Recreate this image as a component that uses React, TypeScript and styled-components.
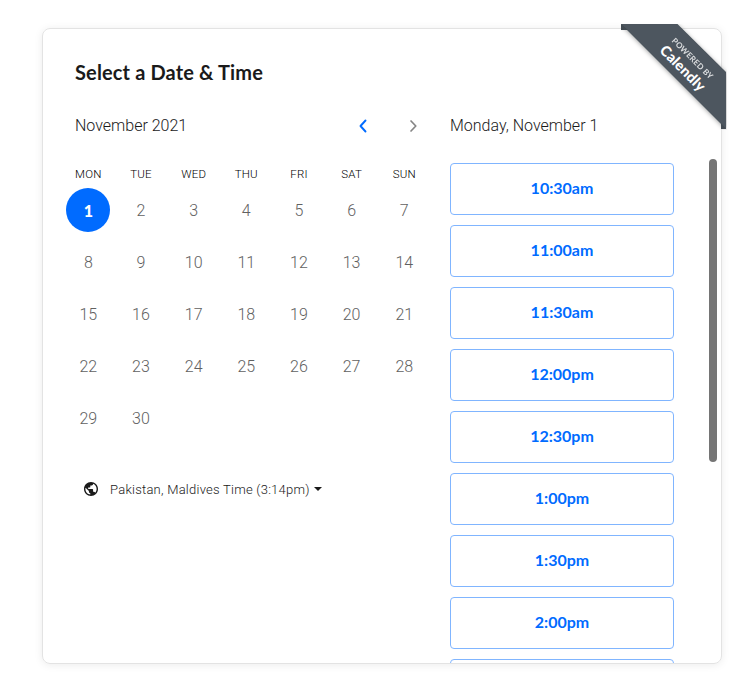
import React from "react";
import styled, { createGlobalStyle, css } from "styled-components";

const blue = "#006bff";
const ink = "#1a1a1a";

const GlobalStyle = createGlobalStyle`
  * { box-sizing: border-box; }
  body { margin: 0; background: #fff; color: ${ink}; font-family: Roboto, Lato, sans-serif; font-weight: 300; overflow: hidden; }
  button { font: inherit; color: inherit; background: none; border: 0; padding: 0; cursor: pointer; }
`;

const Page = styled.main`
  height: 684px;
  padding: 28px 26px 20px 42px;
`;

const Card = styled.section`
  position: relative;
  width: 680px;
  height: 636px;
  border: 1px solid #e3e3e3;
  border-radius: 8px;
  box-shadow: 0 1px 8px rgba(0, 0, 0, 0.08);
  display: flex;
`;

const CalendarPane = styled.div`
  width: 375px;
  padding: 31px 0 0 32px;
`;

const Title = styled.h1`
  margin: 0;
  font: 700 20px/24px Lato, sans-serif;
  letter-spacing: 0.14px;
`;

const MonthBar = styled.div`
  display: flex;
  align-items: center;
  height: 24px;
  margin-top: 30px;
`;

const Month = styled.div`
  flex: 1;
  font-size: 16px;
  line-height: 24px;
`;

const Arrow = styled.button<{ $active?: boolean }>`
  display: flex;
  justify-content: center;
  align-items: center;
  width: 24px;
  height: 24px;
  margin-left: 26px;
  margin-right: -7px;
  color: ${(p) => (p.$active ? blue : "#858585")};
  &:first-of-type { margin-right: 0; }
`;

const WeekRow = styled.div`
  display: grid;
  grid-template-columns: repeat(7, 52.67px);
  margin: 28px 0 0 -13px;
  text-align: center;
  line-height: 16px;
`;

const Weekday = styled.div`
  font-size: 11.5px;
  letter-spacing: 0.2px;
  color: #000;
`;

const Days = styled.div`
  display: grid;
  grid-template-columns: repeat(7, 52.67px);
  grid-auto-rows: 52px;
  margin: 2px 0 0 -13px;
  justify-items: center;
  align-items: center;
`;

const Day = styled.div<{ $selected?: boolean }>`
  display: flex;
  align-items: center;
  justify-content: center;
  width: 44px;
  height: 44px;
  border-radius: 50%;
  padding-top: 1px;
  font-size: 16px;
  color: #616161;
  ${(p) => p.$selected && css`
    background: ${blue};
    color: #fff;
    font-family: Lato, sans-serif;
    font-weight: 900;
  `}
`;

const Timezone = styled.div`
  display: flex;
  align-items: center;
  height: 20px;
  margin: 35px 0 0 9px;
  font-size: 13px;
  letter-spacing: 0.24px;
`;

const ZoneName = styled.span`
  margin: 0 4px 0 12px;
  white-space: nowrap;
`;

const TimesPane = styled.div`
  display: flex;
  flex-direction: column;
  flex: 1;
  padding: 85px 4px 0 32px;
  overflow: hidden;
`;

const SelectedDate = styled.div`
  font-size: 16px;
  line-height: 24px;
`;

const TimesArea = styled.div`
  display: flex;
  justify-content: space-between;
  flex: 1;
  min-height: 0;
  overflow: hidden;
  margin-top: 21px;
`;

const TimeList = styled.div`
  display: flex;
  flex-direction: column;
  gap: 10px;
  padding-top: 4px;
`;

const TimeSlot = styled.button`
  flex: none;
  width: 224px;
  height: 52px;
  padding-bottom: 2px;
  border: 1px solid #80b5ff;
  border-radius: 4px;
  color: ${blue};
  font: 700 16px/20px Lato, sans-serif;
`;

const ScrollThumb = styled.div`
  width: 8px;
  height: 303px;
  border-radius: 4px;
  background: #757575;
`;

/* Corner banner laid over the card's top right edge. */
const Ribbon = styled.a`
  position: absolute;
  top: -5px;
  right: -6px;
  width: 106px;
  height: 106px;
  overflow: hidden;
`;

const RibbonShape = styled.svg`
  display: block;
`;

const RibbonText = styled.span`
  position: absolute;
  left: 15.5px;
  top: 26px;
  width: 100px;
  display: flex;
  flex-direction: column;
  align-items: center;
  transform: rotate(45deg);
  font-family: Lato, sans-serif;
  font-weight: 700;
  color: #fff;
`;

const PoweredBy = styled.span`
  font-size: 8px;
  line-height: 12px;
  opacity: 0.8;
  letter-spacing: 0.2px;
`;

const Brand = styled.span`
  font-size: 14.5px;
  line-height: 16px;
  font-weight: 900;
  letter-spacing: 0.2px;
`;

const weekdays = ["MON", "TUE", "WED", "THU", "FRI", "SAT", "SUN"];
const days = Array.from({ length: 30 }, (_, i) => i + 1);
const times = ["10:30am", "11:00am", "11:30am", "12:00pm", "12:30pm", "1:00pm", "1:30pm", "2:00pm"];

const Chevron = ({ d, width }: { d: string; width: number }) => (
  <svg width="10" height="14" viewBox="0 0 10 14" fill="none" stroke="currentColor" strokeWidth={width} strokeLinecap="round" strokeLinejoin="round">
    <path d={d} />
  </svg>
);

export default function App() {
  return (
    <Page>
      <GlobalStyle />
      <Card>
        <CalendarPane>
          <Title>Select a Date &amp; Time</Title>
          <MonthBar>
            <Month>November 2021</Month>
            <Arrow $active aria-label="Previous month"><Chevron d="M7.5 1.5 2.5 7l5 5.5" width={1.9} /></Arrow>
            <Arrow aria-label="Next month"><Chevron d="m3 2 4.8 5L3 12" width={1.7} /></Arrow>
          </MonthBar>
          <WeekRow>{weekdays.map((d) => <Weekday key={d}>{d}</Weekday>)}</WeekRow>
          <Days>{days.map((d) => <Day key={d} $selected={d === 1}>{d}</Day>)}</Days>
          <Timezone>
            <svg width="14" height="14" viewBox="2 2 20 20" fill={ink}>
              <path d="M12 2C6.48 2 2 6.48 2 12s4.48 10 10 10 10-4.48 10-10S17.52 2 12 2zm-1 17.93c-3.95-.49-7-3.85-7-7.93 0-.62.08-1.21.21-1.79L9 15v1c0 1.1.9 2 2 2v1.93zm6.9-2.54c-.26-.81-1-1.39-1.9-1.39h-1v-3c0-.55-.45-1-1-1H8v-2h2c.55 0 1-.45 1-1V7h2c1.1 0 2-.9 2-2v-.41c2.93 1.19 5 4.06 5 7.41 0 2.08-.8 3.97-2.1 5.39z" />
            </svg>
            <ZoneName>Pakistan, Maldives Time (3:14pm)</ZoneName>
            <svg width="8" height="4" viewBox="0 0 8 4" fill={ink}><path d="M0 0h8L4 4z" /></svg>
          </Timezone>
        </CalendarPane>
        <TimesPane>
          <SelectedDate>Monday, November 1</SelectedDate>
          <TimesArea>
            <TimeList>
              {times.map((t) => <TimeSlot key={t}>{t}</TimeSlot>)}
              <TimeSlot aria-label="Next available time" />
            </TimeList>
            <ScrollThumb />
          </TimesArea>
        </TimesPane>
        <Ribbon>
          <RibbonShape width="106" height="106" viewBox="0 0 106 106">
            <defs>
              <filter id="ribbon-shadow" x="-20%" y="-20%" width="140%" height="140%">
                <feDropShadow dx="0" dy="1" stdDeviation="2" floodColor="#000" floodOpacity="0.35" />
              </filter>
            </defs>
            <path d="M0 0v6h10zM105 105h-5V95z" fill="#3e464d" />
            <path d="M0 0h56.5L105 48v57z" fill="#4d565e" filter="url(#ribbon-shadow)" />
            <path d="M0 0v6h7zM105 105h-5v-6z" fill="#434b53" />
          </RibbonShape>
          <RibbonText><PoweredBy>POWERED BY</PoweredBy><Brand>Calendly</Brand></RibbonText>
        </Ribbon>
      </Card>
    </Page>
  );
}
